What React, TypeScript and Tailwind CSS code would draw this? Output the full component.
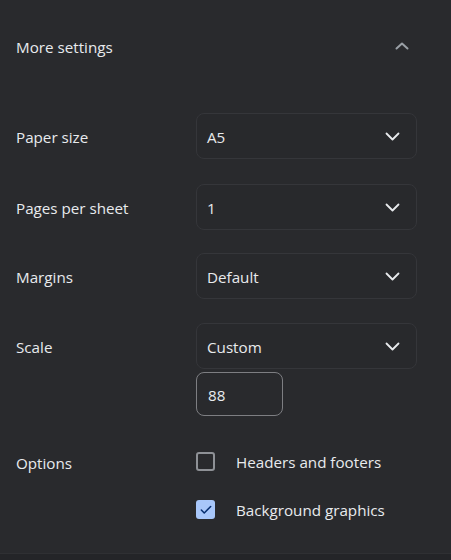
import { Check } from "lucide-react";

const font = { fontFamily: '"Open Sans", "Noto Sans", sans-serif' };

function ChevronDown() {
  return (
    <svg width="15" height="9" viewBox="0 0 15 9" fill="none">
      <path d="M1.5 1.5l6 6 6-6" stroke="#e8eaed" strokeWidth="1.8" strokeLinecap="round" strokeLinejoin="round" />
    </svg>
  );
}

function Select({ value }: { value: string }) {
  return (
    <div className="flex items-center justify-between h-[46px] w-[221px] rounded-[8px] border border-[#35363a] bg-[#28292c] pl-[10px] pr-[16px]">
      <span className="pt-[2px]">{value}</span>
      <ChevronDown />
    </div>
  );
}

function Row({ label, children, className = "" }: { label: string; children: React.ReactNode; className?: string }) {
  return (
    <div className={`grid grid-cols-[180px_1fr] items-center ${className}`}>
      <span className="pt-[2px]">{label}</span>
      <div>{children}</div>
    </div>
  );
}

export default function App() {
  return (
    <div
      style={font}
      className="w-[451px] h-[560px] bg-[#292a2d] text-[#e8eaed] text-[15.2px] flex flex-col overflow-hidden"
    >
      <div className="flex-1 pl-4 flex flex-col">
        {/* Header */}
        <div className="flex items-center justify-between h-[92px] pr-[42px]">
          <span className="pt-[2px]">More settings</span>
          <svg width="14" height="8" viewBox="0 0 14 8" fill="none">
            <path d="M1.5 6.5l5.5-5 5.5 5" stroke="#9aa0a6" strokeWidth="2" strokeLinecap="round" strokeLinejoin="round" />
          </svg>
        </div>

        <div className="flex flex-col pt-[21px]">
          <Row label="Paper size">
            <Select value="A5" />
          </Row>
          <Row label="Pages per sheet" className="mt-[25px]">
            <Select value="1" />
          </Row>
          <Row label="Margins" className="mt-[23px]">
            <Select value="Default" />
          </Row>
          <Row label="Scale" className="mt-[24px]">
            <Select value="Custom" />
          </Row>
          <div className="grid grid-cols-[180px_1fr] mt-[3px]">
            <span />
            <div className="flex items-center h-[44px] w-[87px] rounded-[8px] border border-[#7d7e82] pl-[11px] pt-[2px]">
              88
            </div>
          </div>

          <div className="grid grid-cols-[180px_1fr] mt-[36px]">
            <span className="leading-[19px] pt-[2px]">Options</span>
            <div className="flex flex-col gap-[29px]">
              <label className="flex items-center gap-[21px] h-[19px]">
                <span className="w-[19px] h-[19px] rounded-[3px] border-2 border-[#8e9196]" />
                <span className="pt-[2px]">Headers and footers</span>
              </label>
              <label className="flex items-center gap-[21px] h-[19px]">
                <span className="w-[19px] h-[19px] rounded-[3px] bg-[#a8c7fa] flex items-center justify-center">
                  <Check size={14} strokeWidth={2.6} color="#062e6f" />
                </span>
                <span className="pt-[2px]">Background graphics</span>
              </label>
            </div>
          </div>
        </div>
      </div>
      {/* Bottom edge */}
      <div className="h-[7px] bg-[#242528] border-t border-[#2f3033]" />
    </div>
  );
}
